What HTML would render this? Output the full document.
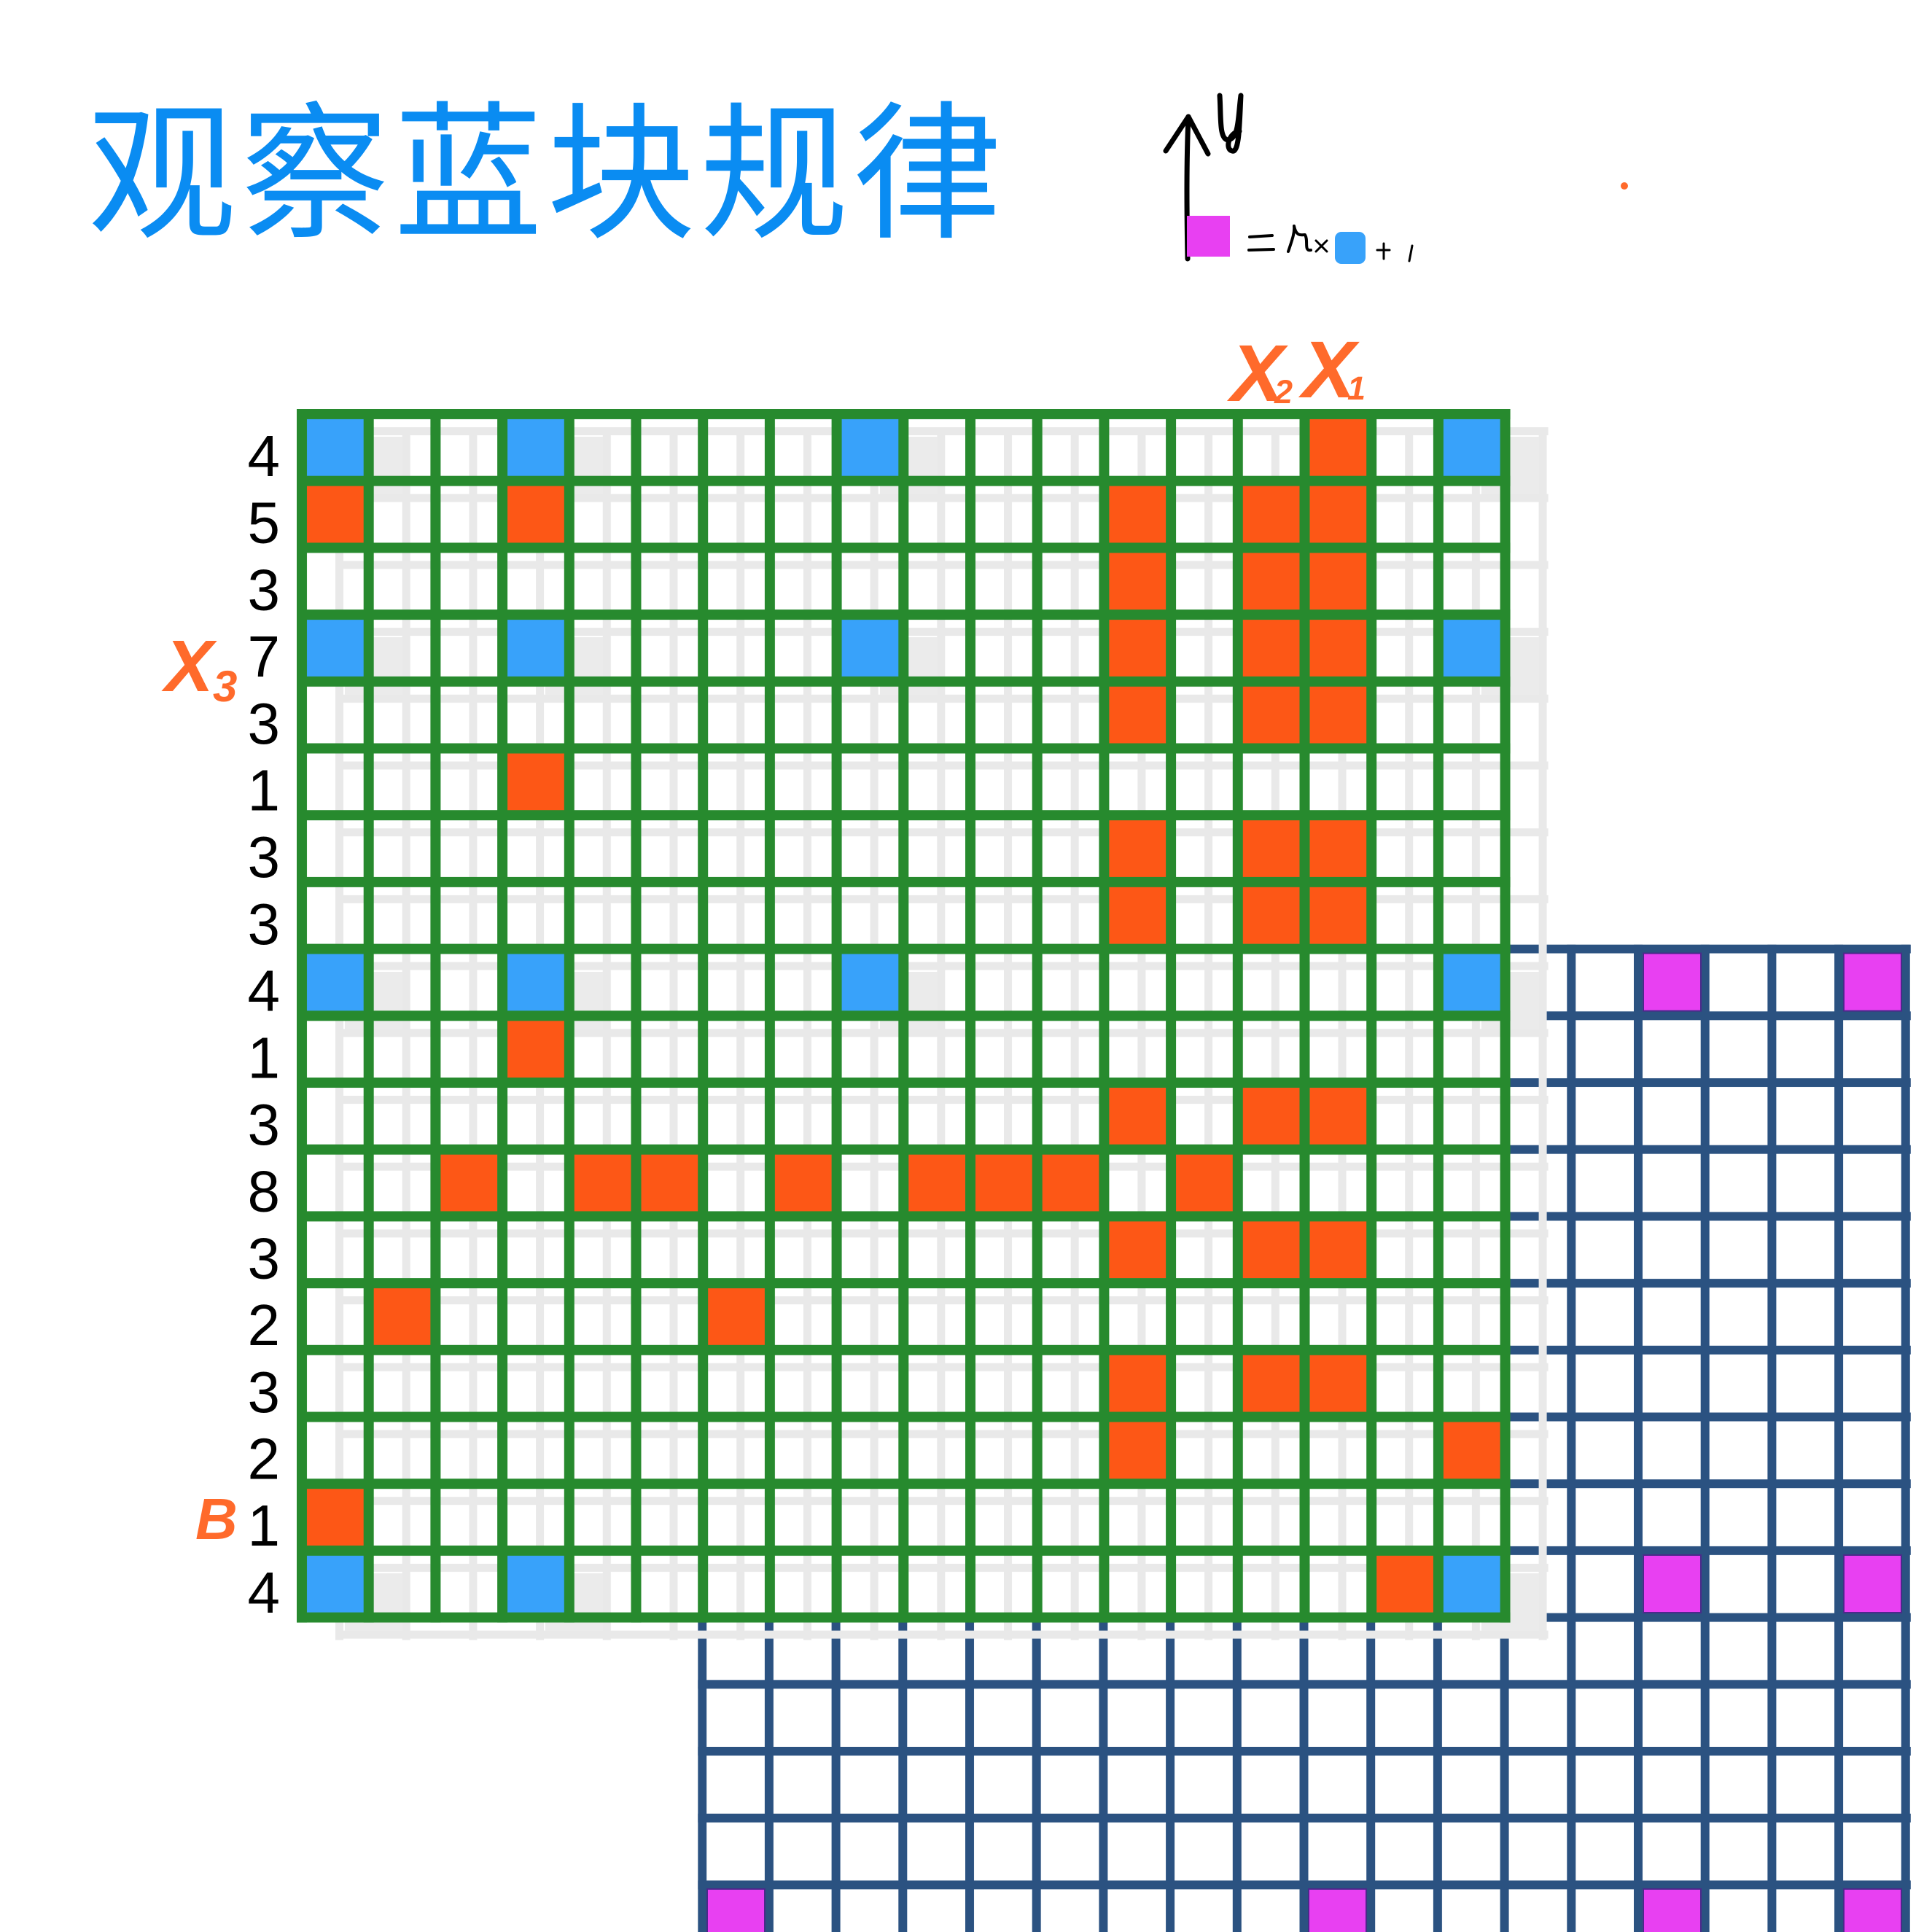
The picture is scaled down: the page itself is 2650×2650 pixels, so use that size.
<!DOCTYPE html>
<html><head><meta charset="utf-8"><style>
html,body{margin:0;padding:0;background:#fff;}
svg{display:block;}
</style></head><body>
<svg xmlns="http://www.w3.org/2000/svg" width="2650" height="2650" viewBox="0 0 2650 2650">
<defs>
<pattern id="pg" x="407" y="561" width="91.7" height="91.7" patternUnits="userSpaceOnUse">
<rect x="0" y="0" width="14" height="91.7" fill="#278a2e"/><rect x="0" y="0" width="91.7" height="14" fill="#278a2e"/>
</pattern>
<pattern id="pb" x="957.2" y="1295.6" width="91.7" height="91.7" patternUnits="userSpaceOnUse">
<rect x="0" y="0" width="12" height="91.7" fill="#2b5281"/><rect x="0" y="0" width="91.7" height="12" fill="#2b5281"/>
</pattern>
<pattern id="pgr" x="460" y="586" width="91.7" height="91.7" patternUnits="userSpaceOnUse">
<rect x="0" y="0" width="11" height="91.7" fill="#e9e9e9"/><rect x="0" y="0" width="91.7" height="11" fill="#e9e9e9"/>
</pattern>
</defs>
<rect width="2650" height="2650" fill="#fff"/>
<text x="120" y="310" font-family="'Liberation Sans','Noto Sans CJK SC',sans-serif" font-size="204" letter-spacing="6" fill="#0a8cf2">观察蓝块规律</text>

<g fill="none" stroke="#000" stroke-linecap="round" stroke-linejoin="round">
<path d="M1629 355 C1628 300 1627 230 1630 160" stroke-width="7"/>
<path d="M1599 207 L1630 160 L1657 211" stroke-width="7"/>
<path d="M1673 131 C1675 160 1672 190 1684 192 C1700 190 1698 160 1702 131 C1700 170 1700 210 1690 207 C1680 205 1685 182 1700 180" stroke-width="7"/>
<path d="M1714 325 L1745 323 M1713 343 L1747 342" stroke-width="4"/>
<path d="M1767 345 C1772 330 1776 320 1775 310 C1778 325 1785 322 1790 322 C1795 330 1788 345 1798 343" stroke-width="4"/>
<path d="M1805 330 L1820 345 M1820 330 L1805 345" stroke-width="3"/>
<path d="M1889 343 L1906 343 M1898 334 L1898 355" stroke-width="3"/>
<path d="M1937 337 L1933 358" stroke-width="3"/>
</g>
<rect x="1628" y="296" width="59" height="56" fill="#e840f2"/>
<rect x="1831" y="318" width="42" height="44" rx="9" fill="#38a2fa"/>
<circle cx="2228" cy="255" r="5" fill="#ff6a2b"/>

<rect x="957.2" y="1295.6" width="1663.6" height="1400" fill="url(#pb)"/>
<g fill="#e840f2" stroke="#4a2a8a" stroke-width="2">
<rect x="2254" y="1307.6" width="79" height="79"/><rect x="2529" y="1307.6" width="79" height="79"/>
<rect x="2254" y="2133" width="79" height="79"/><rect x="2529" y="2133" width="79" height="79"/>
<rect x="970" y="2591" width="79" height="79"/><rect x="1795" y="2591" width="79" height="79"/>
<rect x="2254" y="2591" width="79" height="79"/><rect x="2529" y="2591" width="79" height="79"/>
</g>

<rect x="407" y="561" width="1663.6" height="1663.6" fill="#fff"/>
<rect x="460" y="586" width="1663.6" height="1663.6" fill="url(#pgr)"/>
<g fill="#ebebeb">
<rect x="473" y="599" width="79" height="79"/><rect x="748" y="599" width="79" height="79"/><rect x="1207" y="599" width="79" height="79"/><rect x="2032" y="599" width="79" height="79"/>
<rect x="473" y="874" width="79" height="79"/><rect x="748" y="874" width="79" height="79"/><rect x="1207" y="874" width="79" height="79"/><rect x="2032" y="874" width="79" height="79"/>
<rect x="473" y="1333" width="79" height="79"/><rect x="748" y="1333" width="79" height="79"/><rect x="1207" y="1333" width="79" height="79"/><rect x="2032" y="1333" width="79" height="79"/>
<rect x="473" y="2158" width="79" height="79"/><rect x="748" y="2158" width="79" height="79"/><rect x="2032" y="2158" width="79" height="79"/>
</g>
<g fill="#38a2fa">
<rect x="420" y="574" width="79" height="79"/><rect x="695.1" y="574" width="79" height="79"/><rect x="1153.6" y="574" width="79" height="79"/><rect x="1978.9" y="574" width="79" height="79"/>
<rect x="420" y="849.1" width="79" height="79"/><rect x="695.1" y="849.1" width="79" height="79"/><rect x="1153.6" y="849.1" width="79" height="79"/><rect x="1978.9" y="849.1" width="79" height="79"/>
<rect x="420" y="1307.6" width="79" height="79"/><rect x="695.1" y="1307.6" width="79" height="79"/><rect x="1153.6" y="1307.6" width="79" height="79"/><rect x="1978.9" y="1307.6" width="79" height="79"/>
<rect x="420" y="2132.9" width="79" height="79"/><rect x="695.1" y="2132.9" width="79" height="79"/><rect x="1978.9" y="2132.9" width="79" height="79"/>
</g>
<g fill="#fd5716">
<rect x="1795.5" y="574" width="79" height="79"/>
<rect x="420" y="665.7" width="79" height="79"/><rect x="695.1" y="665.7" width="79" height="79"/>
<rect x="1520.4" y="665.7" width="79" height="79"/><rect x="1703.8" y="665.7" width="79" height="79"/><rect x="1795.5" y="665.7" width="79" height="79"/>
<rect x="1520.4" y="757.4" width="79" height="79"/><rect x="1703.8" y="757.4" width="79" height="79"/><rect x="1795.5" y="757.4" width="79" height="79"/>
<rect x="1520.4" y="849.1" width="79" height="79"/><rect x="1703.8" y="849.1" width="79" height="79"/><rect x="1795.5" y="849.1" width="79" height="79"/>
<rect x="1520.4" y="940.8" width="79" height="79"/><rect x="1703.8" y="940.8" width="79" height="79"/><rect x="1795.5" y="940.8" width="79" height="79"/>
<rect x="695.1" y="1032.5" width="79" height="79"/>
<rect x="1520.4" y="1124.2" width="79" height="79"/><rect x="1703.8" y="1124.2" width="79" height="79"/><rect x="1795.5" y="1124.2" width="79" height="79"/>
<rect x="1520.4" y="1215.9" width="79" height="79"/><rect x="1703.8" y="1215.9" width="79" height="79"/><rect x="1795.5" y="1215.9" width="79" height="79"/>
<rect x="695.1" y="1399.3" width="79" height="79"/>
<rect x="1520.4" y="1491" width="79" height="79"/><rect x="1703.8" y="1491" width="79" height="79"/><rect x="1795.5" y="1491" width="79" height="79"/>
<rect x="603.4" y="1582.7" width="79" height="79"/><rect x="786.8" y="1582.7" width="79" height="79"/><rect x="878.5" y="1582.7" width="79" height="79"/><rect x="1061.9" y="1582.7" width="79" height="79"/>
<rect x="1245.3" y="1582.7" width="79" height="79"/><rect x="1337" y="1582.7" width="79" height="79"/><rect x="1428.7" y="1582.7" width="79" height="79"/><rect x="1612.1" y="1582.7" width="79" height="79"/>
<rect x="1520.4" y="1674.4" width="79" height="79"/><rect x="1703.8" y="1674.4" width="79" height="79"/><rect x="1795.5" y="1674.4" width="79" height="79"/>
<rect x="511.7" y="1766.1" width="79" height="79"/><rect x="970.2" y="1766.1" width="79" height="79"/>
<rect x="1520.4" y="1857.8" width="79" height="79"/><rect x="1703.8" y="1857.8" width="79" height="79"/><rect x="1795.5" y="1857.8" width="79" height="79"/>
<rect x="1520.4" y="1949.5" width="79" height="79"/><rect x="1978.9" y="1949.5" width="79" height="79"/>
<rect x="420" y="2041.2" width="79" height="79"/>
<rect x="1887.2" y="2132.9" width="79" height="79"/>
</g>
<rect x="407" y="561" width="1664.6" height="1664.6" fill="url(#pg)"/>

<g font-family="'Liberation Sans',sans-serif" font-size="80" fill="#000" text-anchor="end">
<text x="384" y="653">4</text><text x="384" y="744.7">5</text><text x="384" y="836.4">3</text><text x="384" y="928.1">7</text>
<text x="384" y="1019.8">3</text><text x="384" y="1111.5">1</text><text x="384" y="1203.2">3</text><text x="384" y="1294.9">3</text>
<text x="384" y="1386.6">4</text><text x="384" y="1478.3">1</text><text x="384" y="1570">3</text><text x="384" y="1661.7">8</text>
<text x="384" y="1753.4">3</text><text x="384" y="1845.1">2</text><text x="384" y="1936.8">3</text><text x="384" y="2028.5">2</text>
<text x="384" y="2120.2">1</text><text x="384" y="2211.9">4</text>
</g>

<g font-family="'Liberation Sans',sans-serif" font-style="italic" font-weight="bold" fill="#ff6a2b">
<text x="226" y="948" font-size="100">X</text><text x="292" y="962" font-size="60">3</text>
<text x="268" y="2111" font-size="80">B</text>
<text x="1688" y="550" font-size="110">X</text><text x="1748" y="553" font-size="45">2</text>
<text x="1786" y="545" font-size="110">X</text><text x="1848" y="548" font-size="45">1</text>
</g>
</svg>
</body></html>
